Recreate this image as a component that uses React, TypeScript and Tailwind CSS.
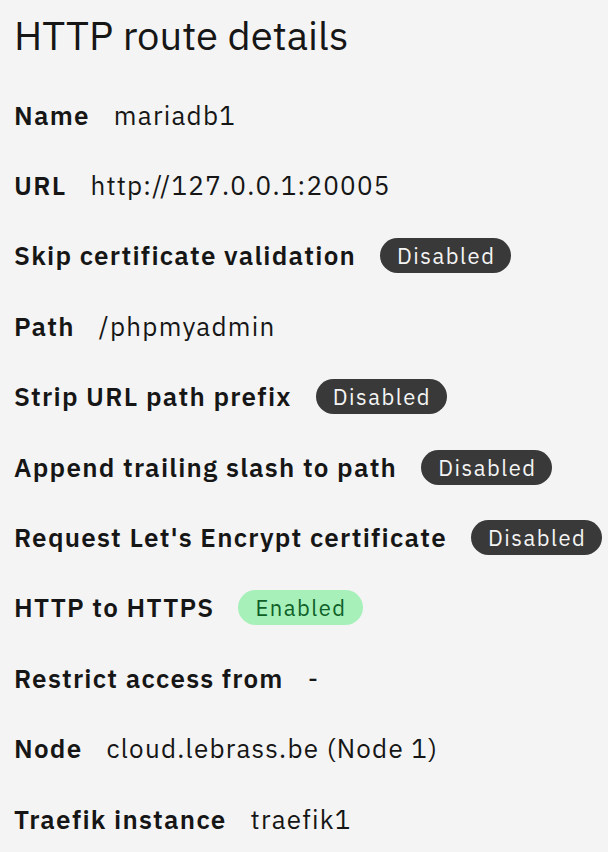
const rows: { label: string; value?: string; tag?: "on" | "off" }[] = [
  { label: "Name", value: "mariadb1" },
  { label: "URL", value: "http://127.0.0.1:20005" },
  { label: "Skip certificate validation", tag: "off" },
  { label: "Path", value: "/phpmyadmin" },
  { label: "Strip URL path prefix", tag: "off" },
  { label: "Append trailing slash to path", tag: "off" },
  { label: "Request Let's Encrypt certificate", tag: "off" },
  { label: "HTTP to HTTPS", tag: "on" },
  { label: "Restrict access from", value: "-" },
  { label: "Node", value: "cloud.lebrass.be (Node 1)" },
  { label: "Traefik instance", value: "traefik1" },
];

function Tag({ on }: { on: boolean }) {
  return (
    <span
      className={`inline-flex h-[35px] items-center rounded-full pr-[16px] pl-[17px] text-[22px] tracking-[1.5px] ${
        on ? "bg-[#a7f0ba] text-[#0e6027]" : "bg-[#393939] text-[#f4f4f4]"
      }`}
    >
      {on ? "Enabled" : "Disabled"}
    </span>
  );
}

export default function App() {
  return (
    <div
      className="min-h-[852px] w-[608px] overflow-hidden bg-[#f4f4f4] pl-[14px] text-[#161616]"
      style={{ fontFamily: '"IBM Plex Sans", "Noto Sans", sans-serif' }}
    >
      {/* Title */}
      <h1 className="h-[80px] pt-[8px] text-[40px] leading-[54px] font-normal">
        HTTP route details
      </h1>

      {/* Detail rows */}
      <div className="flex flex-col">
        {rows.map((row) => (
          <div
            key={row.label}
            className="flex h-[70.4px] items-center gap-[24px] whitespace-nowrap text-[26px] tracking-[1.25px]"
          >
            <span className="font-semibold">{row.label}</span>
            {row.tag ? <Tag on={row.tag === "on"} /> : <span>{row.value}</span>}
          </div>
        ))}
      </div>
    </div>
  );
}
